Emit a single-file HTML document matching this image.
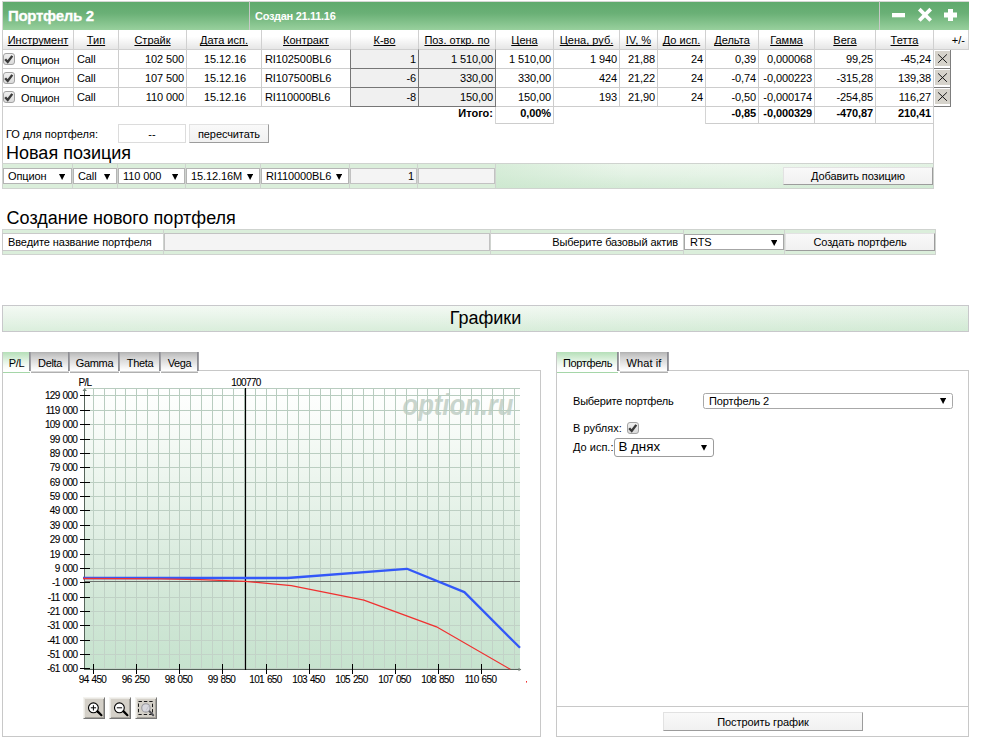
<!DOCTYPE html>
<html><head><meta charset="utf-8"><title>Портфель 2</title>
<style>
*{box-sizing:border-box;margin:0;padding:0}
html,body{width:984px;height:741px;overflow:hidden;background:#fff}
body{position:relative;font-family:"Liberation Sans",sans-serif;font-size:11px;color:#000}
.a{position:absolute}
.t{position:absolute;white-space:nowrap;line-height:13px;height:13px}
.r{text-align:right}
.c{text-align:center}
.b{font-weight:bold}
.u{text-decoration:underline}
.cell{position:absolute;border-right:1px solid #cdcdcd;border-bottom:1px solid #cdcdcd;background:#fff;letter-spacing:-0.1px}
.th{text-decoration-skip-ink:none;position:absolute;border-right:1px solid #d0d0d0;border-bottom:1px solid #d0d0d0;background:linear-gradient(#ffffff,#ffffff 35%,#e6e6e6);text-align:center;line-height:20px;text-decoration:underline;white-space:nowrap}
.inp{position:absolute;background:#f0f0f0;border:1px solid #c9c9c9;border-top-color:#8a8a8a;border-left-color:#8a8a8a}
.sel{position:absolute;background:#fff;border:1px solid #a9a9a9;white-space:nowrap;overflow:hidden}
.btn{position:absolute;background:linear-gradient(#f9f9f9,#f1f1f1);border:1px solid #e2e2e2;border-right-color:#9c9c9c;border-bottom-color:#9c9c9c;text-align:center;white-space:nowrap;letter-spacing:-0.1px}
.tab{position:absolute;height:21px;text-align:center;white-space:nowrap;font-size:11px;letter-spacing:-0.35px;line-height:22px;background:linear-gradient(#b0b0b0 0,#c0c0c0 2px,#d3d3d3 6px,#e4e4e4 11px,#f3f3f3 15px,#fdfdfd 18px,#ffffff 19px,#d8d8d8 19px,#d8d8d8 20px,#b0b0b0 20px,#b0b0b0 21px)}
.tab.on{background:linear-gradient(#b5dfb8 0,#c9e8cb 4px,#e2f3e3 9px,#f6fbf6 14px,#ffffff 18px,#ffffff 20px,#a5d6a8 20px,#a5d6a8 21px)}
.tsep{position:absolute;top:352px;width:2px;height:19px;background:linear-gradient(90deg,#8e8e94 0,#8e8e94 1px,#9f9fa4 1px,#9f9fa4 2px)}
</style></head><body>

<div class="a" style="left:2px;top:1px;width:967px;height:30px;background:#d4d8d4"></div>
<div class="a" style="left:3px;top:2px;width:966px;height:28px;background:linear-gradient(#5faa6d,#6ab076 40%,#98d09d)"></div>
<div class="a" style="left:249px;top:1px;width:1px;height:30px;background:#c6c9c6"></div>
<div class="a" style="left:879px;top:1px;width:1px;height:30px;background:#c6c9c6"></div>
<div class="t b" style="left:8px;top:7px;font-size:15px;letter-spacing:-0.3px;line-height:18px;height:18px;color:#fff;-webkit-text-stroke:0.3px #fff">Портфель 2</div>
<div class="t b" style="left:255px;top:10px;font-size:11px;letter-spacing:-0.3px;color:#fff">Создан 21.11.16</div>
<svg class="a" style="left:880px;top:2px" width="88" height="28" viewBox="0 0 88 28"><rect x="12" y="11" width="13" height="4.3" fill="#fff"/><path d="M39.3 7.1 L50.7 18.5 M50.7 7.1 L39.3 18.5" stroke="#fff" stroke-width="3.7" fill="none"/><path d="M70.5 7 V19 M64 12.9 H77" stroke="#fff" stroke-width="5" fill="none"/></svg>
<div class="a" style="left:2px;top:30px;width:1px;height:134px;background:#cdcdcd"></div>
<div class="th" style="left:3px;top:30px;width:71px;height:20px;">Инструмент</div>
<div class="th" style="left:74px;top:30px;width:45px;height:20px;">Тип</div>
<div class="th" style="left:119px;top:30px;width:68px;height:20px;">Страйк</div>
<div class="th" style="left:187px;top:30px;width:75px;height:20px;">Дата исп.</div>
<div class="th" style="left:262px;top:30px;width:89px;height:20px;">Контракт</div>
<div class="th" style="left:351px;top:30px;width:68px;height:20px;">К-во</div>
<div class="th" style="left:419px;top:30px;width:77px;height:20px;">Поз. откр. по</div>
<div class="th" style="left:496px;top:30px;width:58px;height:20px;">Цена</div>
<div class="th" style="left:554px;top:30px;width:66px;height:20px;">Цена, руб.</div>
<div class="th" style="left:620px;top:30px;width:38px;height:20px;">IV, %</div>
<div class="th" style="left:658px;top:30px;width:48px;height:20px;">До исп.</div>
<div class="th" style="left:706px;top:30px;width:53px;height:20px;">Дельта</div>
<div class="th" style="left:759px;top:30px;width:56px;height:20px;">Гамма</div>
<div class="th" style="left:815px;top:30px;width:61px;height:20px;">Вега</div>
<div class="th" style="left:876px;top:30px;width:58px;height:20px;">Тетта</div>
<div class="th" style="left:934px;top:30px;width:35px;height:20px;text-decoration:none;text-align:right;padding-right:3px;">+/-</div>
<div class="cell" style="left:3px;top:50px;width:71px;height:19px"><svg class="a" style="left:0px;top:3px" width="12" height="12" viewBox="0 0 12 12"><defs><linearGradient id="cb" x1="0" y1="0" x2="0" y2="1"><stop offset="0" stop-color="#f1f1f1"/><stop offset="1" stop-color="#d9d9d9"/></linearGradient></defs><rect x="0.5" y="0.5" width="11" height="11" rx="2.5" fill="url(#cb)" stroke="#a3a3a3"/><path d="M2.2 6.3 L4.7 9 L9.3 2.9" stroke="#3b3b3b" stroke-width="2.4" fill="none"/></svg><div class="t" style="left:18px;top:4px">Опцион</div></div>
<div class="cell" style="left:74px;top:50px;width:45px;height:19px"><div class="t" style="left:3px;top:3px">Call</div></div>
<div class="cell" style="left:119px;top:50px;width:68px;height:19px"><div class="t r" style="right:2px;top:3px">102 500</div></div>
<div class="cell" style="left:187px;top:50px;width:75px;height:19px"><div class="t c" style="left:1px;width:74px;top:3px">15.12.16</div></div>
<div class="cell" style="left:262px;top:50px;width:89px;height:19px"><div class="t" style="left:3px;top:3px">RI102500BL6</div></div>
<div class="cell" style="left:351px;top:50px;width:68px;height:19px;background:#f0f0f0"><div class="t r" style="right:2px;top:3px">1</div></div>
<div class="a" style="left:350px;top:49px;width:69px;height:20px;border-left:1px solid #767676;border-top:1px solid transparent;border-right:1px solid transparent;border-bottom:1px solid transparent"></div>
<div class="cell" style="left:419px;top:50px;width:77px;height:19px;background:#f0f0f0"><div class="t r" style="right:2px;top:3px">1 510,00</div></div>
<div class="a" style="left:418px;top:49px;width:78px;height:20px;border-left:1px solid #767676;border-top:1px solid transparent;border-right:1px solid #767676;border-bottom:1px solid transparent"></div>
<div class="cell" style="left:496px;top:50px;width:58px;height:19px"><div class="t r" style="right:2px;top:3px">1 510,00</div></div>
<div class="cell" style="left:554px;top:50px;width:66px;height:19px"><div class="t r" style="right:2px;top:3px">1 940</div></div>
<div class="cell" style="left:620px;top:50px;width:38px;height:19px"><div class="t r" style="right:2px;top:3px">21,88</div></div>
<div class="cell" style="left:658px;top:50px;width:48px;height:19px"><div class="t r" style="right:2px;top:3px">24</div></div>
<div class="cell" style="left:706px;top:50px;width:53px;height:19px"><div class="t r" style="right:2px;top:3px">0,39</div></div>
<div class="cell" style="left:759px;top:50px;width:56px;height:19px"><div class="t r" style="right:2px;top:3px">0,000068</div></div>
<div class="cell" style="left:815px;top:50px;width:61px;height:19px"><div class="t r" style="right:2px;top:3px">99,25</div></div>
<div class="cell" style="left:876px;top:50px;width:58px;height:19px"><div class="t r" style="right:2px;top:3px">-45,24</div></div>
<div class="a" style="left:934px;top:50px;width:17px;height:19px;background:#fff;border-right:1px solid #7d7d7d;border-bottom:1px solid #7d7d7d"><div class="a" style="left:1px;top:1px;width:15px;height:15px;background:#d6d3cb"></div><svg class="a" style="left:1px;top:1px" width="15" height="15" viewBox="0 0 15 15"><path d="M3.1 3.4 L11.9 11.8 M11.9 3.4 L3.1 11.8" stroke="#1a1a1a" stroke-width="1" fill="none"/></svg></div>
<div class="cell" style="left:3px;top:69px;width:71px;height:19px"><svg class="a" style="left:0px;top:3px" width="12" height="12" viewBox="0 0 12 12"><defs><linearGradient id="cb" x1="0" y1="0" x2="0" y2="1"><stop offset="0" stop-color="#f1f1f1"/><stop offset="1" stop-color="#d9d9d9"/></linearGradient></defs><rect x="0.5" y="0.5" width="11" height="11" rx="2.5" fill="url(#cb)" stroke="#a3a3a3"/><path d="M2.2 6.3 L4.7 9 L9.3 2.9" stroke="#3b3b3b" stroke-width="2.4" fill="none"/></svg><div class="t" style="left:18px;top:4px">Опцион</div></div>
<div class="cell" style="left:74px;top:69px;width:45px;height:19px"><div class="t" style="left:3px;top:3px">Call</div></div>
<div class="cell" style="left:119px;top:69px;width:68px;height:19px"><div class="t r" style="right:2px;top:3px">107 500</div></div>
<div class="cell" style="left:187px;top:69px;width:75px;height:19px"><div class="t c" style="left:1px;width:74px;top:3px">15.12.16</div></div>
<div class="cell" style="left:262px;top:69px;width:89px;height:19px"><div class="t" style="left:3px;top:3px">RI107500BL6</div></div>
<div class="cell" style="left:351px;top:69px;width:68px;height:19px;background:#f0f0f0"><div class="t r" style="right:2px;top:3px">-6</div></div>
<div class="a" style="left:350px;top:68px;width:69px;height:20px;border-left:1px solid #767676;border-top:1px solid #767676;border-right:1px solid transparent;border-bottom:1px solid transparent"></div>
<div class="cell" style="left:419px;top:69px;width:77px;height:19px;background:#f0f0f0"><div class="t r" style="right:2px;top:3px">330,00</div></div>
<div class="a" style="left:418px;top:68px;width:78px;height:20px;border-left:1px solid #767676;border-top:1px solid #767676;border-right:1px solid #767676;border-bottom:1px solid transparent"></div>
<div class="cell" style="left:496px;top:69px;width:58px;height:19px"><div class="t r" style="right:2px;top:3px">330,00</div></div>
<div class="cell" style="left:554px;top:69px;width:66px;height:19px"><div class="t r" style="right:2px;top:3px">424</div></div>
<div class="cell" style="left:620px;top:69px;width:38px;height:19px"><div class="t r" style="right:2px;top:3px">21,22</div></div>
<div class="cell" style="left:658px;top:69px;width:48px;height:19px"><div class="t r" style="right:2px;top:3px">24</div></div>
<div class="cell" style="left:706px;top:69px;width:53px;height:19px"><div class="t r" style="right:2px;top:3px">-0,74</div></div>
<div class="cell" style="left:759px;top:69px;width:56px;height:19px"><div class="t r" style="right:2px;top:3px">-0,000223</div></div>
<div class="cell" style="left:815px;top:69px;width:61px;height:19px"><div class="t r" style="right:2px;top:3px">-315,28</div></div>
<div class="cell" style="left:876px;top:69px;width:58px;height:19px"><div class="t r" style="right:2px;top:3px">139,38</div></div>
<div class="a" style="left:934px;top:69px;width:17px;height:19px;background:#fff;border-right:1px solid #7d7d7d;border-bottom:1px solid #7d7d7d"><div class="a" style="left:1px;top:1px;width:15px;height:15px;background:#d6d3cb"></div><svg class="a" style="left:1px;top:1px" width="15" height="15" viewBox="0 0 15 15"><path d="M3.1 3.4 L11.9 11.8 M11.9 3.4 L3.1 11.8" stroke="#1a1a1a" stroke-width="1" fill="none"/></svg></div>
<div class="cell" style="left:3px;top:88px;width:71px;height:19px"><svg class="a" style="left:0px;top:3px" width="12" height="12" viewBox="0 0 12 12"><defs><linearGradient id="cb" x1="0" y1="0" x2="0" y2="1"><stop offset="0" stop-color="#f1f1f1"/><stop offset="1" stop-color="#d9d9d9"/></linearGradient></defs><rect x="0.5" y="0.5" width="11" height="11" rx="2.5" fill="url(#cb)" stroke="#a3a3a3"/><path d="M2.2 6.3 L4.7 9 L9.3 2.9" stroke="#3b3b3b" stroke-width="2.4" fill="none"/></svg><div class="t" style="left:18px;top:4px">Опцион</div></div>
<div class="cell" style="left:74px;top:88px;width:45px;height:19px"><div class="t" style="left:3px;top:3px">Call</div></div>
<div class="cell" style="left:119px;top:88px;width:68px;height:19px"><div class="t r" style="right:2px;top:3px">110 000</div></div>
<div class="cell" style="left:187px;top:88px;width:75px;height:19px"><div class="t c" style="left:1px;width:74px;top:3px">15.12.16</div></div>
<div class="cell" style="left:262px;top:88px;width:89px;height:19px"><div class="t" style="left:3px;top:3px">RI110000BL6</div></div>
<div class="cell" style="left:351px;top:88px;width:68px;height:19px;background:#f0f0f0"><div class="t r" style="right:2px;top:3px">-8</div></div>
<div class="a" style="left:350px;top:87px;width:69px;height:20px;border-left:1px solid #767676;border-top:1px solid #767676;border-right:1px solid transparent;border-bottom:1px solid #767676"></div>
<div class="cell" style="left:419px;top:88px;width:77px;height:19px;background:#f0f0f0"><div class="t r" style="right:2px;top:3px">150,00</div></div>
<div class="a" style="left:418px;top:87px;width:78px;height:20px;border-left:1px solid #767676;border-top:1px solid #767676;border-right:1px solid #767676;border-bottom:1px solid #767676"></div>
<div class="cell" style="left:496px;top:88px;width:58px;height:19px"><div class="t r" style="right:2px;top:3px">150,00</div></div>
<div class="cell" style="left:554px;top:88px;width:66px;height:19px"><div class="t r" style="right:2px;top:3px">193</div></div>
<div class="cell" style="left:620px;top:88px;width:38px;height:19px"><div class="t r" style="right:2px;top:3px">21,90</div></div>
<div class="cell" style="left:658px;top:88px;width:48px;height:19px"><div class="t r" style="right:2px;top:3px">24</div></div>
<div class="cell" style="left:706px;top:88px;width:53px;height:19px"><div class="t r" style="right:2px;top:3px">-0,50</div></div>
<div class="cell" style="left:759px;top:88px;width:56px;height:19px"><div class="t r" style="right:2px;top:3px">-0,000174</div></div>
<div class="cell" style="left:815px;top:88px;width:61px;height:19px"><div class="t r" style="right:2px;top:3px">-254,85</div></div>
<div class="cell" style="left:876px;top:88px;width:58px;height:19px"><div class="t r" style="right:2px;top:3px">116,27</div></div>
<div class="a" style="left:934px;top:88px;width:17px;height:19px;background:#fff;border-right:1px solid #7d7d7d;border-bottom:1px solid #7d7d7d"><div class="a" style="left:1px;top:1px;width:15px;height:15px;background:#d6d3cb"></div><svg class="a" style="left:1px;top:1px" width="15" height="15" viewBox="0 0 15 15"><path d="M3.1 3.4 L11.9 11.8 M11.9 3.4 L3.1 11.8" stroke="#1a1a1a" stroke-width="1" fill="none"/></svg></div>
<div class="t b r" style="left:418px;width:75px;top:107px">Итого:</div>
<div class="a" style="left:495px;top:107px;width:1px;height:17px;background:#d4d4d4"></div>
<div class="cell" style="left:496px;top:107px;width:58px;height:17px"><div class="t b r" style="right:2px;top:0px">0,00%</div></div>
<div class="a" style="left:705px;top:107px;width:1px;height:17px;background:#d4d4d4"></div>
<div class="cell" style="left:706px;top:107px;width:53px;height:17px"><div class="t b r" style="right:2px;top:0px">-0,85</div></div>
<div class="cell" style="left:759px;top:107px;width:56px;height:17px"><div class="t b r" style="right:2px;top:0px">-0,000329</div></div>
<div class="cell" style="left:815px;top:107px;width:61px;height:17px"><div class="t b r" style="right:2px;top:0px">-470,87</div></div>
<div class="cell" style="left:876px;top:107px;width:58px;height:17px"><div class="t b r" style="right:2px;top:0px">210,41</div></div>
<div class="a" style="left:933px;top:107px;width:1px;height:57px;background:#cdcdcd"></div>
<div class="t" style="left:6px;top:128px;font-size:11px">ГО для портфеля:</div>
<div class="a" style="left:118px;top:124px;width:68px;height:19px;background:#fff;border:1px solid #dcdcdc"><div class="t c" style="left:0;width:66px;top:3px">--</div></div>
<div class="btn" style="left:189px;top:124px;width:80px;height:19px;line-height:18.5px;font-size:11px">пересчитать</div>
<div class="t" style="left:6px;top:142px;font-size:18px;line-height:22px;height:22px">Новая позиция</div>
<div class="a" style="left:2px;top:163px;width:932px;height:26px;background:#dbeedb;border:1px solid #cfd3cf"></div>
<div class="a" style="left:496px;top:164px;width:437px;height:24px;background:linear-gradient(90deg,rgba(200,230,203,.55),rgba(255,255,255,.0) 30%,rgba(255,255,255,.12) 60%,rgba(200,230,203,.25)),linear-gradient(#ebf6eb,#e3f2e4 45%,#d4ebd6)"></div>
<div class="a" style="left:72px;top:164px;width:1px;height:24px;background:#cfd3cf"></div>
<div class="a" style="left:117px;top:164px;width:1px;height:24px;background:#cfd3cf"></div>
<div class="a" style="left:185px;top:164px;width:1px;height:24px;background:#cfd3cf"></div>
<div class="a" style="left:260px;top:164px;width:1px;height:24px;background:#cfd3cf"></div>
<div class="a" style="left:349px;top:164px;width:1px;height:24px;background:#cfd3cf"></div>
<div class="a" style="left:417px;top:164px;width:1px;height:24px;background:#cfd3cf"></div>
<div class="a" style="left:495px;top:164px;width:1px;height:24px;background:#cfd3cf"></div>
<div class="sel" style="left:3px;top:168px;width:69px;height:16px;font-size:11px;letter-spacing:-0.1px;line-height:14px;padding-left:4px;border-color:#b4b4b4;border-radius:0px">Опцион<svg class="a" style="right:5.6px;top:4.5px" width="6.2" height="6" viewBox="0 0 8 6" preserveAspectRatio="none"><path d="M0 0 H8 L4 6 Z" fill="#000"/></svg></div>
<div class="sel" style="left:73px;top:168px;width:44px;height:16px;font-size:11px;letter-spacing:-0.1px;line-height:14px;padding-left:4px;border-color:#b4b4b4;border-radius:0px">Call<svg class="a" style="right:5.6px;top:4.5px" width="6.2" height="6" viewBox="0 0 8 6" preserveAspectRatio="none"><path d="M0 0 H8 L4 6 Z" fill="#000"/></svg></div>
<div class="sel" style="left:118px;top:168px;width:67px;height:16px;font-size:11px;letter-spacing:-0.1px;line-height:14px;padding-left:4px;border-color:#b4b4b4;border-radius:0px">110 000<svg class="a" style="right:5.6px;top:4.5px" width="6.2" height="6" viewBox="0 0 8 6" preserveAspectRatio="none"><path d="M0 0 H8 L4 6 Z" fill="#000"/></svg></div>
<div class="sel" style="left:186px;top:168px;width:74px;height:16px;font-size:11px;letter-spacing:-0.1px;line-height:14px;padding-left:4px;border-color:#b4b4b4;border-radius:0px">15.12.16M<svg class="a" style="right:5.6px;top:4.5px" width="6.2" height="6" viewBox="0 0 8 6" preserveAspectRatio="none"><path d="M0 0 H8 L4 6 Z" fill="#000"/></svg></div>
<div class="sel" style="left:261px;top:168px;width:88px;height:16px;font-size:11px;letter-spacing:-0.1px;line-height:14px;padding-left:4px;border-color:#b4b4b4;border-radius:0px">RI110000BL6<svg class="a" style="right:5.6px;top:4.5px" width="6.2" height="6" viewBox="0 0 8 6" preserveAspectRatio="none"><path d="M0 0 H8 L4 6 Z" fill="#000"/></svg></div>
<div class="a" style="left:350px;top:168px;width:67px;height:16px;background:#f4f4f4;border:1px solid #c2c2c2"><div class="t r" style="right:2px;top:1px;font-size:11px">1</div></div>
<div class="a" style="left:418px;top:168px;width:77px;height:16px;background:#f4f4f4;border:1px solid #c2c2c2"></div>
<div class="btn" style="left:783px;top:167px;width:150px;height:18px;line-height:16px;font-size:11px">Добавить позицию</div>
<div class="t" style="left:6.6px;top:207px;font-size:18px;letter-spacing:0.02px;line-height:22px;height:22px">Создание нового портфеля</div>
<div class="a" style="left:2px;top:229px;width:934px;height:26px;background:#dbeedb;border:1px solid #cfd3cf"></div>
<div class="a" style="left:2px;top:233px;width:162px;height:18px;background:#fff;border:1px solid #c9c9c9"><div class="t" style="left:5px;top:2px;font-size:11px;letter-spacing:-0.1px">Введите название портфеля</div></div>
<div class="a" style="left:164px;top:233px;width:326px;height:18px;background:#f4f4f4;border:1px solid #c2c2c2"></div>
<div class="a" style="left:490px;top:233px;width:194px;height:18px;background:#fff;border:1px solid #c9c9c9"><div class="t r" style="right:5px;top:2px;font-size:11px;letter-spacing:-0.1px">Выберите базовый актив</div></div>
<div class="sel" style="left:684px;top:234px;width:100px;height:16px;font-size:11px;letter-spacing:-0.1px;line-height:14px;padding-left:5px;border-color:#a6a6a6;border-radius:0px">RTS<svg class="a" style="right:6px;top:4.5px" width="6.4" height="6" viewBox="0 0 8 6" preserveAspectRatio="none"><path d="M0 0 H8 L4 6 Z" fill="#000"/></svg></div>
<div class="a" style="left:163px;top:230px;width:1px;height:24px;background:#cfd3cf"></div>
<div class="a" style="left:490px;top:230px;width:1px;height:24px;background:#cfd3cf"></div>
<div class="a" style="left:683px;top:230px;width:1px;height:24px;background:#cfd3cf"></div>
<div class="a" style="left:784px;top:230px;width:1px;height:24px;background:#cfd3cf"></div>
<div class="btn" style="left:785px;top:233px;width:150px;height:18px;line-height:16px;font-size:11px">Создать портфель</div>
<div class="a" style="left:2px;top:305px;width:967px;height:27px;background:linear-gradient(90deg,rgba(255,255,255,.12),rgba(255,255,255,.05) 50%,rgba(190,225,195,.18)),linear-gradient(#f2f9f2,#e6f3e7 45%,#d6ecd8);border:1px solid #c8c8cb"><div class="t c" style="left:0;width:965px;top:1px;font-size:18px;line-height:22px;height:22px">Графики</div></div>
<div class="a" style="left:2px;top:370px;width:539px;height:367px;border:1px solid #c8c8c8;background:#fff"></div>
<div class="a" style="left:2px;top:352px;width:1px;height:19px;background:#c8c8c8"></div>
<div class="tab on" style="left:3px;top:352px;width:27px">P/L</div>
<div class="tsep" style="left:29px"></div>
<div class="tab" style="left:31px;top:352px;width:38px">Delta</div>
<div class="tsep" style="left:68px"></div>
<div class="tab" style="left:70px;top:352px;width:49px">Gamma</div>
<div class="tsep" style="left:118px"></div>
<div class="tab" style="left:120px;top:352px;width:40px">Theta</div>
<div class="tsep" style="left:159px"></div>
<div class="tab" style="left:161px;top:352px;width:37px">Vega</div>
<div class="tsep" style="left:197px"></div>
<svg class="a" style="left:0;top:372px" width="545" height="320" viewBox="0 372 545 320" font-family='"Liberation Sans",sans-serif' font-size="10" letter-spacing="-0.65" word-spacing="0.8"><defs><linearGradient id="bg" x1="0" y1="0" x2="0" y2="1"><stop offset="0" stop-color="#ffffff"/><stop offset="0.08" stop-color="#fbfdfb"/><stop offset="0.45" stop-color="#e4f1e7"/><stop offset="0.7" stop-color="#d4e8d9"/><stop offset="1" stop-color="#c6e3ce"/></linearGradient><linearGradient id="gg" gradientUnits="userSpaceOnUse" x1="0" y1="388" x2="0" y2="670"><stop offset="0" stop-color="#b8ccbf"/><stop offset="0.5" stop-color="#bdcfc3"/><stop offset="1" stop-color="#c3d3c8"/></linearGradient></defs><rect x="84" y="388" width="436" height="282" fill="url(#bg)"/><text x="402.5" y="415.3" font-size="29" font-style="italic" font-weight="bold" fill="#c9d5cd" letter-spacing="0" textLength="111" lengthAdjust="spacingAndGlyphs">option.ru</text><path d="M93.5 388 V669 M104.5 388 V669 M115.5 388 V669 M125.5 388 V669 M136.5 388 V669 M147.5 388 V669 M158.5 388 V669 M169.5 388 V669 M179.5 388 V669 M190.5 388 V669 M201.5 388 V669 M212.5 388 V669 M222.5 388 V669 M233.5 388 V669 M244.5 388 V669 M255.5 388 V669 M266.5 388 V669 M276.5 388 V669 M287.5 388 V669 M298.5 388 V669 M309.5 388 V669 M320.5 388 V669 M330.5 388 V669 M341.5 388 V669 M352.5 388 V669 M363.5 388 V669 M373.5 388 V669 M384.5 388 V669 M395.5 388 V669 M406.5 388 V669 M417.5 388 V669 M427.5 388 V669 M438.5 388 V669 M449.5 388 V669 M460.5 388 V669 M471.5 388 V669 M481.5 388 V669 M492.5 388 V669 M503.5 388 V669 M514.5 388 V669 M84 395.5 H520 M84 410.5 H520 M84 424.5 H520 M84 439.5 H520 M84 453.5 H520 M84 467.5 H520 M84 482.5 H520 M84 496.5 H520 M84 510.5 H520 M84 525.5 H520 M84 539.5 H520 M84 554.5 H520 M84 568.5 H520 M84 597.5 H520 M84 611.5 H520 M84 625.5 H520 M84 640.5 H520 M84 654.5 H520 M84 668.5 H520 M84 388.5 H520" stroke="url(#gg)" stroke-width="1" fill="none"/><path d="M84 581.5 H520" stroke="#6c716d" stroke-width="1.05"/><path d="M84.5 389 V670 M84 669.5 H521" stroke="#56655b" stroke-width="1" fill="none"/><path d="M82.5 391 L84.5 388.3 L87 391 Z" fill="#6f7f74"/><path d="M518.5 667.7 L521.3 669.5 L518.5 671.3 Z" fill="#7b857e"/><g stroke="#000" stroke-width="0.1"><path d="M80 395.5 H90" stroke="#000" stroke-width="1"/><text x="77.3" y="399" text-anchor="end">129 000</text><path d="M80 410.5 H90" stroke="#000" stroke-width="1"/><text x="77.3" y="414" text-anchor="end">119 000</text><path d="M80 424.5 H90" stroke="#000" stroke-width="1"/><text x="77.3" y="428" text-anchor="end">109 000</text><path d="M80 439.5 H90" stroke="#000" stroke-width="1"/><text x="77.3" y="443" text-anchor="end">99 000</text><path d="M80 453.5 H90" stroke="#000" stroke-width="1"/><text x="77.3" y="457" text-anchor="end">89 000</text><path d="M80 467.5 H90" stroke="#000" stroke-width="1"/><text x="77.3" y="471" text-anchor="end">79 000</text><path d="M80 482.5 H90" stroke="#000" stroke-width="1"/><text x="77.3" y="486" text-anchor="end">69 000</text><path d="M80 496.5 H90" stroke="#000" stroke-width="1"/><text x="77.3" y="500" text-anchor="end">59 000</text><path d="M80 510.5 H90" stroke="#000" stroke-width="1"/><text x="77.3" y="514" text-anchor="end">49 000</text><path d="M80 525.5 H90" stroke="#000" stroke-width="1"/><text x="77.3" y="529" text-anchor="end">39 000</text><path d="M80 539.5 H90" stroke="#000" stroke-width="1"/><text x="77.3" y="543" text-anchor="end">29 000</text><path d="M80 554.5 H90" stroke="#000" stroke-width="1"/><text x="77.3" y="558" text-anchor="end">19 000</text><path d="M80 568.5 H90" stroke="#000" stroke-width="1"/><text x="77.3" y="572" text-anchor="end">9 000</text><path d="M80 582.5 H90" stroke="#000" stroke-width="1"/><text x="77.3" y="586" text-anchor="end">-1 000</text><path d="M80 597.5 H90" stroke="#000" stroke-width="1"/><text x="77.3" y="601" text-anchor="end">-11 000</text><path d="M80 611.5 H90" stroke="#000" stroke-width="1"/><text x="77.3" y="615" text-anchor="end">-21 000</text><path d="M80 625.5 H90" stroke="#000" stroke-width="1"/><text x="77.3" y="629" text-anchor="end">-31 000</text><path d="M80 640.5 H90" stroke="#000" stroke-width="1"/><text x="77.3" y="644" text-anchor="end">-41 000</text><path d="M80 654.5 H90" stroke="#000" stroke-width="1"/><text x="77.3" y="658" text-anchor="end">-51 000</text><path d="M80 668.5 H90" stroke="#000" stroke-width="1"/><text x="77.3" y="672" text-anchor="end">-61 000</text><path d="M93.5 664 V674" stroke="#000" stroke-width="1"/><text x="92.5" y="683" text-anchor="middle">94 450</text><path d="M136.5 664 V674" stroke="#000" stroke-width="1"/><text x="135.5" y="683" text-anchor="middle">96 250</text><path d="M179.5 664 V674" stroke="#000" stroke-width="1"/><text x="178.5" y="683" text-anchor="middle">98 050</text><path d="M222.5 664 V674" stroke="#000" stroke-width="1"/><text x="221.5" y="683" text-anchor="middle">99 850</text><path d="M266.5 664 V674" stroke="#000" stroke-width="1"/><text x="265.5" y="683" text-anchor="middle">101 650</text><path d="M309.5 664 V674" stroke="#000" stroke-width="1"/><text x="308.5" y="683" text-anchor="middle">103 450</text><path d="M352.5 664 V674" stroke="#000" stroke-width="1"/><text x="351.5" y="683" text-anchor="middle">105 250</text><path d="M395.5 664 V674" stroke="#000" stroke-width="1"/><text x="394.5" y="683" text-anchor="middle">107 050</text><path d="M438.5 664 V674" stroke="#000" stroke-width="1"/><text x="437.5" y="683" text-anchor="middle">108 850</text><path d="M481.5 664 V674" stroke="#000" stroke-width="1"/><text x="480.5" y="683" text-anchor="middle">110 650</text><text x="85" y="386" text-anchor="middle">P/L</text><text x="246" y="386" text-anchor="middle">100770</text></g><path d="M245.5 388 V670" stroke="#000" stroke-width="1.2"/><path d="M83 578 L287.6 578 L406.9 568.8 L464.4 592.1 L520 647.8" stroke="#3358f8" stroke-width="2.3" fill="none" stroke-linejoin="round"/><path d="M83 578.5 L160 578.8 L200 579.6 L245 581.3 L270 583.6 L291.3 585.6 L363.9 600.1 L436.5 626.8 L510.3 669.3" stroke="#f03030" stroke-width="1.3" fill="none"/><rect x="526" y="681" width="1" height="1.6" fill="#f03030"/></svg>
<div class="a" style="left:83px;top:697px;width:22px;height:22px;background:#d4d0c8;border:1px solid #777;border-top-color:#f4f3ef;border-left-color:#f4f3ef;box-shadow:inset 1px 1px 0 #e9e7e2,inset -1px -1px 0 #a5a29b"><svg class="a" style="left:0;top:0" width="20" height="20" viewBox="0 0 20 20"><circle cx="9.4" cy="9.8" r="4.9" fill="#fff" stroke="#000" stroke-width="1.1"/><path d="M13.6 13.4 L17.4 17.2" stroke="#000" stroke-width="2.2" stroke-linecap="round"/><path d="M6.8 9.8 H12.1 M9.4 7.2 V12.5" stroke="#000" stroke-width="1"/></svg></div>
<div class="a" style="left:109px;top:697px;width:22px;height:22px;background:#d4d0c8;border:1px solid #777;border-top-color:#f4f3ef;border-left-color:#f4f3ef;box-shadow:inset 1px 1px 0 #e9e7e2,inset -1px -1px 0 #a5a29b"><svg class="a" style="left:0;top:0" width="20" height="20" viewBox="0 0 20 20"><circle cx="9.4" cy="9.8" r="4.9" fill="#fff" stroke="#000" stroke-width="1.1"/><path d="M13.6 13.4 L17.4 17.2" stroke="#000" stroke-width="2.2" stroke-linecap="round"/><path d="M6.8 9.8 H12.1" stroke="#000" stroke-width="1"/></svg></div>
<div class="a" style="left:135px;top:697px;width:22px;height:22px;background:#d4d0c8;border:1px solid #777;border-top-color:#f4f3ef;border-left-color:#f4f3ef;box-shadow:inset 1px 1px 0 #e9e7e2,inset -1px -1px 0 #a5a29b"><svg class="a" style="left:0;top:0" width="20" height="20" viewBox="0 0 20 20"><rect x="2.5" y="3.5" width="14" height="13" fill="none" stroke="#1a1a1a" stroke-width="1" stroke-dasharray="3.4 2"/><circle cx="9.9" cy="9.9" r="4.2" fill="#d8d8de" stroke="#9a9aa0" stroke-width="1.1"/><path d="M10 12.5 L13 7.5" stroke="#c4c4cc" stroke-width="1"/><path d="M13.6 13.4 L17.2 17.2" stroke="#55555a" stroke-width="2.1" stroke-linecap="round"/></svg></div>
<div class="a" style="left:556px;top:370px;width:413px;height:367px;border:1px solid #c8c8c8;background:#fff"></div>
<div class="a" style="left:556px;top:352px;width:1px;height:19px;background:#c8c8c8"></div>
<div class="tab on" style="left:557px;top:352px;width:61px">Портфель</div>
<div class="tsep" style="left:617px"></div>
<div class="tab" style="left:620px;top:352px;width:48px;letter-spacing:0.1px">What if</div>
<div class="tsep" style="left:667px"></div>
<div class="t" style="left:573px;top:395px;font-size:11px;letter-spacing:-0.2px">Выберите портфель</div>
<div class="sel" style="left:703px;top:393px;width:250px;height:16px;font-size:11px;letter-spacing:-0.1px;line-height:14px;padding-left:5px;border-color:#a8a8a8;border-radius:2.5px">Портфель 2<svg class="a" style="right:5.6px;top:3.7px" width="6.2" height="6" viewBox="0 0 8 6" preserveAspectRatio="none"><path d="M0 0 H8 L4 6 Z" fill="#000"/></svg></div>
<div class="t" style="left:573px;top:422px;font-size:11px">В рублях:</div>
<div class="a" style="left:627px;top:419px;width:12px;height:12px"><svg class="a" style="left:0px;top:3px" width="12" height="12" viewBox="0 0 12 12"><defs><linearGradient id="cb" x1="0" y1="0" x2="0" y2="1"><stop offset="0" stop-color="#f1f1f1"/><stop offset="1" stop-color="#d9d9d9"/></linearGradient></defs><rect x="0.5" y="0.5" width="11" height="11" rx="2.5" fill="url(#cb)" stroke="#a3a3a3"/><path d="M2.2 6.3 L4.7 9 L9.3 2.9" stroke="#3b3b3b" stroke-width="2.4" fill="none"/></svg></div>
<div class="t" style="left:573px;top:441px;font-size:11px">До исп.:</div>
<div class="sel" style="left:614px;top:438px;width:100px;height:19px;font-size:13.33px;letter-spacing:0px;line-height:15.4px;padding-left:3.5px;border-color:#9c9c9c;border-radius:3px">В днях<svg class="a" style="right:5.8px;top:5.8999999999999995px" width="6" height="5.8" viewBox="0 0 8 6" preserveAspectRatio="none"><path d="M0 0 H8 L4 6 Z" fill="#000"/></svg></div>
<div class="a" style="left:557px;top:706px;width:411px;height:1px;background:#c8c8c8"></div>
<div class="btn" style="left:663px;top:712px;width:200px;height:19px;line-height:18.5px;font-size:11px">Построить график</div>
</body></html>
